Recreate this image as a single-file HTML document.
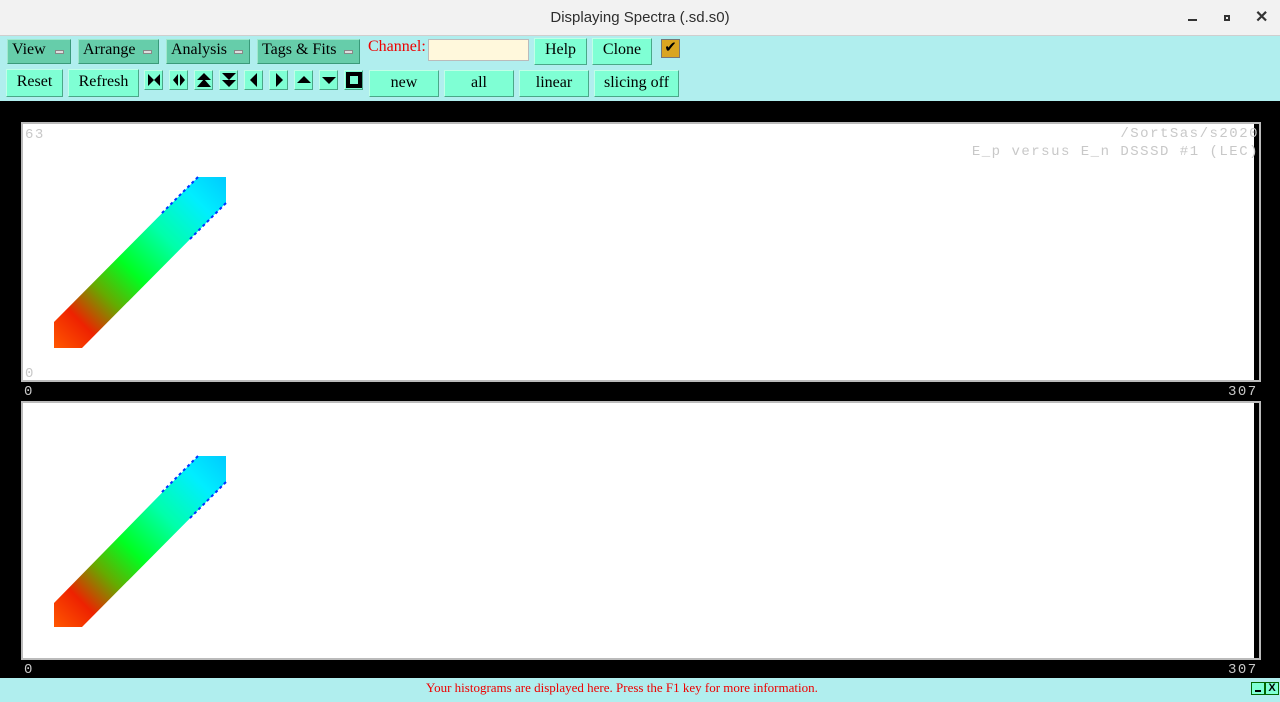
<!DOCTYPE html>
<html><head><style>
*{margin:0;padding:0;box-sizing:border-box}
body{width:1280px;height:702px;overflow:hidden;background:#000;position:relative;font-family:"Liberation Serif",serif}
.a{position:absolute}
#title{left:0;top:0;width:1280px;height:36px;background:#f2f2f2;border-bottom:1px solid #cfcfcf;text-align:center;font:15px "Liberation Sans",sans-serif;line-height:36px;color:#2e2e2e}
#tb{left:0;top:36px;width:1280px;height:65px;background:#b0eeee}
.m{position:absolute;background:#66cdaa;border:1px solid;border-color:#a0e8cc #3a9a7a #3a9a7a #a0e8cc;font-size:16px;padding-left:4px;line-height:20px;color:#000}
.m i{position:absolute;right:6px;top:10px;width:9px;height:4px;background:#ddd;border:1px solid #888}
.b{position:absolute;background:#7fffd4;border:1px solid;border-color:#c0ffe8 #4aa888 #4aa888 #c0ffe8;font-size:16px;text-align:center;color:#000}
.ic{position:absolute;top:70px;width:19px;height:20px;background:#7fffd4;border:1px solid;border-color:#c0ffe8 #4aa888 #4aa888 #c0ffe8}
.ic svg{position:absolute;left:1px;top:1px}
.plot{position:absolute;left:21px;width:1240px;border:2px solid #bbb;background:#fff}
.mono{font-family:"Liberation Mono",monospace;color:#c8c8c8;font-size:14px;letter-spacing:1.5px;position:absolute}
#st{left:0;top:678px;width:1280px;height:24px;background:#b0eeee;color:#e00;font-size:13px;line-height:20px}
</style></head><body>
<div id="title" class="a">Displaying Spectra (.sd.s0)
<span class="a" style="left:1188px;top:19px;width:9px;height:2px;background:#333"></span>
<span class="a" style="left:1224px;top:15px;width:6px;height:6px;border:2px solid #333"></span>
<span class="a" style="left:1255px;top:0;font-size:16px;color:#333;font-weight:bold">✕</span>
</div>
<div id="tb" class="a">
<div class="m" style="left:7px;top:3px;width:64px;height:25px">View<i></i></div>
<div class="m" style="left:78px;top:3px;width:81px;height:25px">Arrange<i></i></div>
<div class="m" style="left:166px;top:3px;width:84px;height:25px">Analysis<i></i></div>
<div class="m" style="left:257px;top:3px;width:103px;height:25px">Tags &amp; Fits<i></i></div>
<div class="a" style="left:368px;top:2px;color:#e00;font-size:16px">Channel:</div>
<div class="a" style="left:428px;top:3px;width:101px;height:22px;background:#fff8dc;border:1px solid #bbb"></div>
<div class="b" style="left:534px;top:2px;width:53px;height:27px;line-height:22px">Help</div>
<div class="b" style="left:592px;top:2px;width:60px;height:27px;line-height:22px">Clone</div>
<div class="a" style="left:661px;top:3px;width:19px;height:19px;background:#daa520;border:1px solid #777;font-size:15px;line-height:17px;text-align:center">✔</div>
<div class="b" style="left:6px;top:33px;width:57px;height:28px;line-height:23px">Reset</div>
<div class="b" style="left:68px;top:33px;width:71px;height:28px;line-height:23px">Refresh</div>
<div class="b" style="left:369px;top:34px;width:70px;height:27px;line-height:24px">new</div>
<div class="b" style="left:444px;top:34px;width:70px;height:27px;line-height:24px">all</div>
<div class="b" style="left:519px;top:34px;width:70px;height:27px;line-height:24px">linear</div>
<div class="b" style="left:594px;top:34px;width:85px;height:27px;line-height:24px">slicing off</div>
</div>
<div class="ic" style="left:144px"><svg width="16" height="16"><path d="M2 2L8 8L2 14ZM14 2L8 8L14 14Z"/></svg></div>
<div class="ic" style="left:169px"><svg width="16" height="16"><path d="M7 2L2 8L7 14ZM9 2L14 8L9 14Z"/></svg></div>
<div class="ic" style="left:194px"><svg width="16" height="16"><path d="M8 1L15 8L1 8ZM8 7L15 15L1 15Z"/></svg></div>
<div class="ic" style="left:219px"><svg width="16" height="16"><path d="M1 1L15 1L8 8ZM1 8L15 8L8 15Z"/></svg></div>
<div class="ic" style="left:244px"><svg width="16" height="16"><path d="M11 1L4 8L11 15Z"/></svg></div>
<div class="ic" style="left:269px"><svg width="16" height="16"><path d="M5 1L12 8L5 15Z"/></svg></div>
<div class="ic" style="left:294px"><svg width="16" height="16"><path d="M8 4L15 11L1 11Z"/></svg></div>
<div class="ic" style="left:319px"><svg width="16" height="16"><path d="M1 5L15 5L8 12Z"/></svg></div>
<div class="ic" style="left:344px"><svg width="16" height="16"><path d="M0 0H16V16H0ZM4 4V12H12V4Z" fill-rule="evenodd"/></svg></div>

<div class="plot" style="top:122px;height:260px">
<div class="a" style="right:0;top:0;width:5px;height:100%;background:#000"></div>
<span class="mono" style="left:2px;top:3px">63</span>
<span class="mono" style="left:2px;top:242px">0</span>
<span class="mono" style="right:0px;top:2px">/SortSas/s2020</span>
<span class="mono" style="right:0px;top:20px">E_p versus E_n DSSSD #1 (LEC)</span>
<svg class="a" style="left:0;top:0" width="240" height="256"><defs><linearGradient id="g" x1="33" y1="224" x2="203" y2="55" gradientUnits="userSpaceOnUse"><stop offset="0" stop-color="#ff5500"/><stop offset="0.15" stop-color="#ee2200"/><stop offset="0.3" stop-color="#66aa00"/><stop offset="0.45" stop-color="#00ff22"/><stop offset="0.65" stop-color="#00ffaa"/><stop offset="0.85" stop-color="#00eeff"/><stop offset="1" stop-color="#00ccff"/></linearGradient></defs><polygon points="31,198 175,53 203,53 203,79 59,224 31,224" fill="url(#g)"/><path d="M175,53L137,91M203,79L165,117" stroke="#0033ff" stroke-width="2" stroke-dasharray="3 3"/></svg>
</div>
<span class="mono" style="left:24px;top:384px">0</span>
<span class="mono" style="left:1228px;top:384px">307</span>

<div class="plot" style="top:401px;height:259px">
<div class="a" style="right:0;top:0;width:5px;height:100%;background:#000"></div>
<svg class="a" style="left:0;top:0" width="240" height="256"><polygon points="31,200 175,53 203,53 203,79 59,224 31,224" fill="url(#g)"/><path d="M175,53L137,91M203,79L165,117" stroke="#0033ff" stroke-width="2" stroke-dasharray="3 3"/></svg>
</div>
<span class="mono" style="left:24px;top:662px">0</span>
<span class="mono" style="left:1228px;top:662px">307</span>

<div id="st" class="a"><span class="a" style="left:426px;top:0;white-space:nowrap">Your histograms are displayed here. Press the F1 key for more information.</span>
<span class="a" style="left:1251px;top:4px;width:14px;height:13px;background:#7fffd4;border:1px solid #060"><span class="a" style="left:3px;top:7px;width:6px;height:2px;background:#000"></span></span>
<span class="a" style="left:1265px;top:4px;width:14px;height:13px;background:#7fffd4;border:1px solid #060;color:#000;font:bold 11px 'Liberation Sans',sans-serif;line-height:11px;text-align:center">X</span>
</div>
</body></html>
